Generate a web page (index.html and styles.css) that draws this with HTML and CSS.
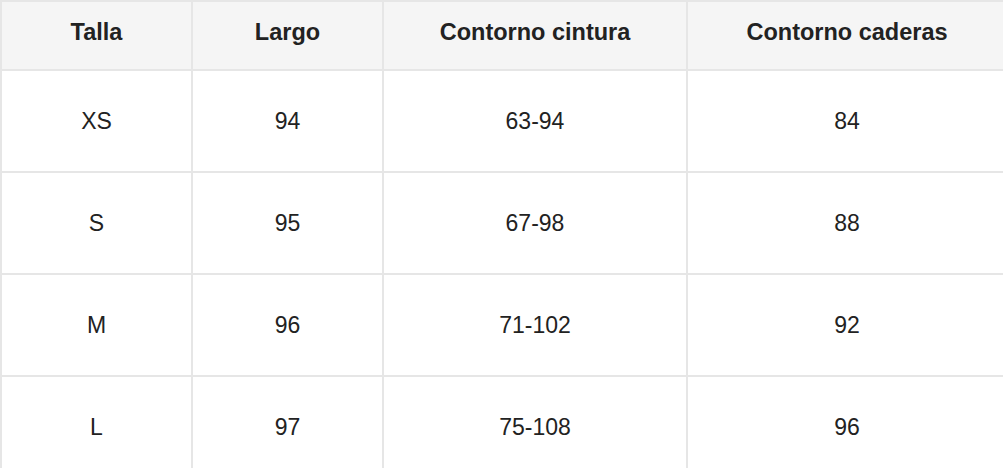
FILE: index.html
```html
<!DOCTYPE html>
<html lang="es">
<head>
<meta charset="utf-8">
<link rel="stylesheet" href="styles.css">
</head>
<body>
<table class="size-table">
  <colgroup>
    <col class="c1"><col class="c2"><col class="c3"><col class="c4">
  </colgroup>
  <thead>
    <tr><th>Talla</th><th>Largo</th><th>Contorno cintura</th><th>Contorno caderas</th></tr>
  </thead>
  <tbody>
    <tr><td>XS</td><td>94</td><td>63-94</td><td>84</td></tr>
    <tr><td>S</td><td>95</td><td>67-98</td><td>88</td></tr>
    <tr><td>M</td><td>96</td><td>71-102</td><td>92</td></tr>
    <tr><td>L</td><td>97</td><td>75-108</td><td>96</td></tr>
  </tbody>
</table>
</body>
</html>
```
FILE: styles.css
```css
html, body {
  margin: 0;
  padding: 0;
  background: #ffffff;
  overflow: hidden;
}
.size-table {
  border-collapse: collapse;
  table-layout: fixed;
  width: 1006px;
  font-family: "Liberation Sans", Arial, sans-serif;
  color: #222222;
}
.c1 { width: 191px; }
.c2 { width: 191px; }
.c3 { width: 304px; }
.c4 { width: 320px; }
.size-table th,
.size-table td {
  border: 2px solid #e6e6e6;
  text-align: center;
  padding: 0;
}
.size-table th {
  background: #f5f5f5;
  font-weight: bold;
  font-size: 23.5px;
  height: 60px;
  padding-bottom: 7px;
}
.size-table td {
  font-size: 23px;
  height: 100px;
}
```
